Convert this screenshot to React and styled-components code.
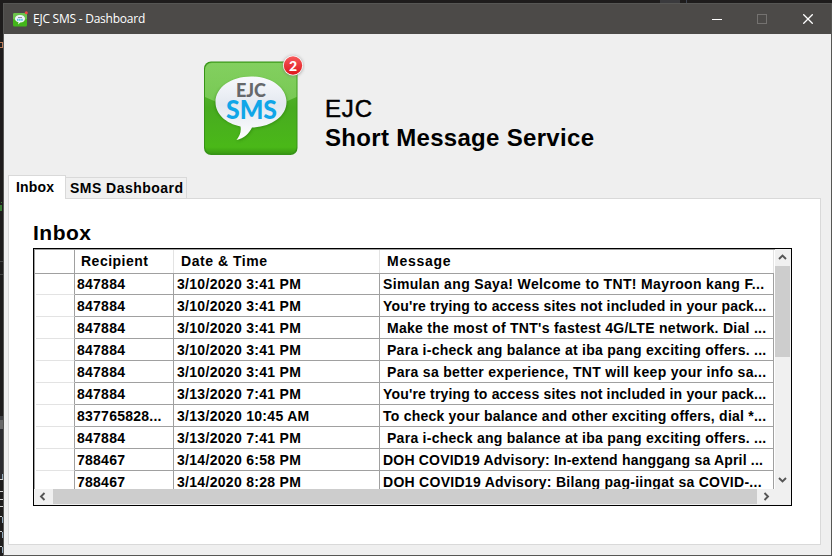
import React from "react";
import styled, { createGlobalStyle } from "styled-components";

const GlobalStyle = createGlobalStyle`
  * { box-sizing: border-box; }
  body { margin: 0; overflow: hidden; background: #1e1e1e; }
`;

const Desktop = styled.div`
  width: 832px;
  height: 556px;
  padding: 3px 0 0 3px;
  background:
    linear-gradient(#3a3a3d, #3a3a3d) 660px 0 / 20px 3px no-repeat,
    linear-gradient(#3d4350, #3d4350) 686px 0 / 1px 3px no-repeat,
    linear-gradient(#b77a58, #b77a58) 0 42px / 2px 1px no-repeat,
    linear-gradient(#b77a58, #b77a58) 0 47px / 2px 1px no-repeat,
    linear-gradient(#b77a58, #b77a58) 2px 42px / 1px 6px no-repeat,
    linear-gradient(#397a35, #397a35) 1px 202px / 1px 1px no-repeat,
    linear-gradient(#397a35, #397a35) 0 205px / 2px 6px no-repeat,
    linear-gradient(#434343, #434343) 0 261px / 3px 1px no-repeat,
    linear-gradient(#434343, #434343) 0 274px / 3px 1px no-repeat,
    linear-gradient(#3e3e42, #3e3e42) 0 416px / 3px 4px no-repeat,
    linear-gradient(#686868, #686868) 0 420px / 3px 9px no-repeat,
    linear-gradient(#8fa6b8, #8fa6b8) 2px 474px / 1px 5px no-repeat,
    linear-gradient(#d0d0d0, #d0d0d0) 0 479px / 3px 1px no-repeat,
    linear-gradient(#d0d0d0, #d0d0d0) 0 491px / 3px 1px no-repeat,
    linear-gradient(#d0d0d0, #d0d0d0) 0 499px / 3px 1px no-repeat,
    linear-gradient(#d0d0d0, #d0d0d0) 0 506px / 3px 1px no-repeat,
    linear-gradient(#d0d0d0, #d0d0d0) 0 516px / 2px 1px no-repeat,
    linear-gradient(#8fa6b8, #8fa6b8) 2px 517px / 1px 6px no-repeat,
    linear-gradient(#d0d0d0, #d0d0d0) 0 531px / 2px 1px no-repeat,
    linear-gradient(#8fa6b8, #8fa6b8) 2px 532px / 1px 6px no-repeat,
    linear-gradient(#d0d0d0, #d0d0d0) 0 546px / 2px 1px no-repeat,
    linear-gradient(#8fa6b8, #8fa6b8) 2px 547px / 1px 6px no-repeat,
    linear-gradient(#2c2c30, #2c2c30) 0 429px / 3px 50px no-repeat,
    #1e1c1c;
`;

const Window = styled.main`
  display: flex;
  flex-direction: column;
  width: 829px;
  height: 553px;
  border: 1px solid #565654;
  background: #efefef;
  color: #000;
  font-family: "Liberation Sans", Arial, sans-serif;
`;

const TitleBar = styled.header`
  display: flex;
  align-items: center;
  flex: 0 0 30px;
  padding-left: 8px;
  background: #4c4a48;
`;

const WindowTitle = styled.span`
  flex: 1;
  margin-left: 5px;
  color: #fff;
  font: 12px/16px "Open Sans", "Noto Sans", sans-serif;
  letter-spacing: -0.24px;
`;

const CaptionButton = styled.button`
  display: flex;
  align-items: center;
  justify-content: center;
  width: ${(p) => p.$width || 46}px;
  height: 30px;
  padding: 0;
  border: 0;
  background: none;
  color: ${(p) => (p.$muted ? "#747270" : "#fff")};
`;

const Banner = styled.section`
  display: flex;
  flex: 0 0 141px;
  padding: 18px 0 0 199px;
`;

const Heading = styled.h1`
  margin: 42px 0 0 20px;
  font-size: 24px;
  line-height: 29px;
  white-space: nowrap;
`;

const HeadingLine = styled.span`
  display: block;
  font-weight: ${(p) => (p.$light ? 400 : 700)};
  letter-spacing: ${(p) => p.$spacing}px;
  -webkit-text-stroke: ${(p) => (p.$light ? 0.5 : 0)}px #000;
`;

const TabBar = styled.nav`
  display: flex;
  align-items: flex-end;
  flex: 0 0 23px;
  margin-left: 4px;
`;

const Tab = styled.button`
  height: ${(p) => (p.$active ? 24 : 21)}px;
  width: ${(p) => p.$width}px;
  margin-bottom: ${(p) => (p.$active ? -1 : 0)}px;
  padding: 0 0 ${(p) => (p.$active ? 2 : 0)}px ${(p) => (p.$active ? 7 : 4)}px;
  z-index: ${(p) => (p.$active ? 1 : 0)};
  border: 1px solid #d9d9d9;
  border-left-width: ${(p) => (p.$active ? 1 : 0)}px;
  border-bottom: 0;
  background: ${(p) => (p.$active ? "#fff" : "#f0f0f0")};
  color: #000;
  font: bold 14px/20px "Liberation Sans", Arial, sans-serif;
  letter-spacing: ${(p) => p.$spacing}px;
  text-align: left;
  white-space: nowrap;
`;

const TabPanel = styled.section`
  flex: 0 0 347px;
  width: 813px;
  margin-left: 4px;
  padding: 21px 24px 0;
  border: 1px solid #d9d9d9;
  background: #fff;
`;

const PanelTitle = styled.h2`
  height: 28px;
  margin: 0;
  font-family: "Liberation Sans", Arial, sans-serif;
  font-size: 21px;
  line-height: 25px;
  font-weight: 700;
  letter-spacing: 0.5px;
`;

const GridFrame = styled.div`
  display: grid;
  grid-template-columns: 741px 16px;
  grid-template-rows: 240px 16px;
  width: 759px;
  height: 258px;
  border: 1px solid #000;
  background: #f0f0f0;
`;

const Viewport = styled.div`
  overflow: hidden;
  border-top: 1px solid #a0a0a0;
  border-left: 1px solid #a0a0a0;
  background: #fff;
  font-size: 14px;
  font-weight: 700;
`;

const GridRow = styled.div`
  display: grid;
  grid-template-columns: 40px 99px 206px 394px;
  height: ${(p) => (p.$header ? 23 : 22)}px;
`;

const HeaderCell = styled.div`
  padding-left: ${(p) => p.$indent || 7}px;
  border-right: 1px solid ${(p) => (p.$corner ? "#a0a0a0" : "#e3e3e3")};
  border-bottom: 1px solid #a0a0a0;
  line-height: 23px;
  letter-spacing: ${(p) => p.$spacing}px;
`;

const RowHeader = styled.div`
  margin-left: 1px;
  border-right: 1px solid #a0a0a0;
  border-bottom: 1px solid #e3e3e3;
`;

const Cell = styled.div`
  overflow: hidden;
  padding-left: ${(p) => (p.$indent ? 7 : 3)}px;
  border-right: 1px solid #a0a0a0;
  border-bottom: 1px solid #a0a0a0;
  line-height: 23px;
  letter-spacing: ${(p) => p.$spacing}px;
  white-space: nowrap;
`;

const RecipientCell = styled(Cell)`
  padding-left: 2px;
`;

const VerticalBar = styled.div`
  display: flex;
  flex-direction: column;
  padding-right: 1px;
`;

const HorizontalBar = styled.div`
  display: flex;
  padding: 0 0 1px;
`;

const ArrowButton = styled.button`
  display: flex;
  align-items: center;
  justify-content: center;
  flex: 0 0 ${(p) => p.$size}px;
  padding: 0;
  border: 0;
  background: #f0f0f0;
`;

const Thumb = styled.div`
  flex: 0 0 ${(p) => p.$length}px;
  background: #cdcdcd;
`;

const Track = styled.div`
  flex: 1;
`;

const ARROWS = {
  up: "M1 6 4.5 2.5 8 6",
  down: "M1 2 4.5 5.5 8 2",
  left: "M5.5 1 2 4.5 5.5 8",
  right: "M2.500 1 6 4.5 2.500 8",
};

function ScrollArrow({ direction, size }) {
  return (
    <ArrowButton $size={size} aria-label={direction}>
      <svg width="9" height="9" viewBox="0 0 9 9">
        <path d={ARROWS[direction]} fill="none" stroke="#555" strokeWidth="1.9" />
      </svg>
    </ArrowButton>
  );
}

function Logo() {
  return (
    <svg width="102" height="104" viewBox="0 0 102 104">
      <defs>
        <linearGradient id="tile" x1="0" y1="0" x2="0" y2="1">
          <stop offset="0" stopColor="#66bb40" />
          <stop offset=".5" stopColor="#48ab20" />
          <stop offset=".93" stopColor="#4ab818" />
          <stop offset="1" stopColor="#3a9c12" />
        </linearGradient>
        <linearGradient id="shine" x1="0" y1="0" x2="0" y2="1">
          <stop offset="0" stopColor="#8fd86c" stopOpacity=".7" />
          <stop offset="1" stopColor="#93da72" stopOpacity=".6" />
        </linearGradient>
        <linearGradient id="bubble" x1="0" y1="0" x2="0" y2="1">
          <stop offset="0" stopColor="#f8f9fc" />
          <stop offset=".45" stopColor="#e3e8f0" />
          <stop offset="1" stopColor="#fff" />
        </linearGradient>
        <linearGradient id="badge" x1="0" y1="0" x2="0" y2="1">
          <stop offset="0" stopColor="#f7595a" />
          <stop offset="1" stopColor="#dd161c" />
        </linearGradient>
        <filter id="soft" x="-20%" y="-20%" width="140%" height="140%">
          <feGaussianBlur stdDeviation="1.5" />
        </filter>
      </defs>
      <rect x="1" y="9.500" width="93.500" height="93.500" rx="7" fill="#369416" />
      <rect x="2" y="10.500" width="91.500" height="91" rx="6.500" fill="url(#tile)" />
      <path d="M2 18a7 7 0 0 1 7-7h77.500a7 7 0 0 1 7 7v27Q48 68 2 45Z" fill="url(#shine)" />
      <path
        d="M48 26c20 0 36 11 36 25S68 76 50 76c-3 6-9 12-16 13 3-4 5-9 4-14C23 71 12 63 12 51c0-14 16-25 36-25Z"
        fill="#24740d"
        opacity=".6"
        filter="url(#soft)"
      />
      <path
        d="M48 24.500c20 0 35.500 11 35.500 25.500S68 75 49 75.500c-3 6-8 11-15.500 12.500 3-4 5-8 4-13.500C23 71.500 12.500 62 12.500 50 12.500 35.500 28 24.500 48 24.500Z"
        fill="url(#bubble)"
      />
      <g fontFamily="Lato, sans-serif" fontWeight="900">
        <text x="33" y="44.500" fontSize="18" textLength="30" lengthAdjust="spacingAndGlyphs" fill="#66686b">EJC</text>
        <text x="23" y="66.500" fontSize="27" textLength="51" lengthAdjust="spacingAndGlyphs" fill="#10a6e8">SMS</text>
      </g>
      <circle cx="90" cy="14" r="10.500" fill="#777" opacity=".5" filter="url(#soft)" />
      <circle cx="90" cy="13.500" r="10" fill="#fff" />
      <circle cx="90" cy="13.500" r="9.200" fill="url(#badge)" />
      <text x="90" y="18.500" fontFamily="Lato, sans-serif" fontWeight="900" fontSize="14" textAnchor="middle" fill="#fff">2</text>
    </svg>
  );
}

function AppIcon() {
  return (
    <svg width="16" height="16" viewBox="0 0 16 16">
      <rect x="1" y="2" width="14" height="13.500" rx="1.500" fill="#43b51b" />
      <path d="M1 3.500A1.500 1.500 0 0 1 2.500 2h11A1.500 1.500 0 0 1 15 3.500V8Q8 11 1 8Z" fill="#6cc34b" />
      <path d="M8 4c3 0 5 1.600 5 3.700s-2 3.700-4.700 3.700L6 13.500l.5-2.300C4.500 10.700 3 9.500 3 7.700 3 5.600 5 4 8 4Z" fill="#eef5f9" />
      <path d="M6 6.500h4" stroke="#8b9299" />
      <path d="M5 8.800h6" stroke="#56bce5" strokeWidth="2" strokeDasharray="1.500 .6" />
      <circle cx="14.300" cy="1.800" r="1.500" fill="#ee4444" />
    </svg>
  );
}

const MESSAGES = [
  ["847884", "3/10/2020 3:41 PM", "Simulan ang Saya! Welcome to TNT! Mayroon kang F...", 0.346],
  ["847884", "3/10/2020 3:41 PM", "You're trying to access sites not included in your pack...", 0.17],
  ["847884", "3/10/2020 3:41 PM", "Make the most of TNT's fastest 4G/LTE network. Dial ...", 0.28, true],
  ["847884", "3/10/2020 3:41 PM", "Para i-check ang balance at iba pang exciting offers. ...", 0.27, true],
  ["847884", "3/10/2020 3:41 PM", "Para sa better experience, TNT will keep your info sa...", 0.315, true],
  ["847884", "3/13/2020 7:41 PM", "You're trying to access sites not included in your pack...", 0.17],
  ["837765828...", "3/13/2020 10:45 AM", "To check your balance and other exciting offers, dial *...", 0.228],
  ["847884", "3/13/2020 7:41 PM", "Para i-check ang balance at iba pang exciting offers. ...", 0.27, true],
  ["788467", "3/14/2020 6:58 PM", "DOH COVID19 Advisory: In-extend hanggang sa April ...", 0.19],
  ["788467", "3/14/2020 8:28 PM", "DOH COVID19 Advisory: Bilang pag-iingat sa COVID-...", 0.28],
];

export default function App() {
  return (
    <Desktop>
      <GlobalStyle />
      <Window>
        <TitleBar>
          <AppIcon />
          <WindowTitle>EJC SMS - Dashboard</WindowTitle>
          <CaptionButton $width={44} aria-label="Minimize">
            <svg width="10" height="10"><path d="M0 5.500h10" stroke="currentColor" /></svg>
          </CaptionButton>
          <CaptionButton $muted disabled aria-label="Maximize">
            <svg width="10" height="10"><rect x=".5" y=".5" width="9" height="9" fill="none" stroke="currentColor" /></svg>
          </CaptionButton>
          <CaptionButton aria-label="Close">
            <svg width="10" height="10"><path d="M.3.3 9.700 9.700M9.700.3.3 9.700" stroke="currentColor" strokeWidth="1.300" /></svg>
          </CaptionButton>
        </TitleBar>
        <Banner>
          <Logo />
          <Heading>
            <HeadingLine $light $spacing={0.83}>EJC</HeadingLine>
            <HeadingLine $spacing={0.31}>Short Message Service</HeadingLine>
          </Heading>
        </Banner>
        <TabBar>
          <Tab $active $width={58} $spacing={0.17}>Inbox</Tab>
          <Tab $width={121} $spacing={0.47}>SMS Dashboard</Tab>
        </TabBar>
        <TabPanel>
          <PanelTitle>Inbox</PanelTitle>
          <GridFrame>
            <Viewport>
              <GridRow $header>
                <HeaderCell $corner />
                <HeaderCell $spacing={0.5} $indent={6}>Recipient</HeaderCell>
                <HeaderCell $spacing={0.53}>Date &amp; Time</HeaderCell>
                <HeaderCell $spacing={0.75}>Message</HeaderCell>
              </GridRow>
              {MESSAGES.map(([recipient, date, message, spacing, indent], i) => (
                <GridRow key={i}>
                  <RowHeader />
                  <RecipientCell $spacing={0.25}>{recipient}</RecipientCell>
                  <Cell $spacing={0.3}>{date}</Cell>
                  <Cell $spacing={spacing} $indent={indent}>{message}</Cell>
                </GridRow>
              ))}
            </Viewport>
            <VerticalBar>
              <ScrollArrow direction="up" size={17} />
              <Thumb $length={91} />
              <Track />
              <ScrollArrow direction="down" size={17} />
            </VerticalBar>
            <HorizontalBar>
              <ScrollArrow direction="left" size={19} />
              <Thumb $length={704} />
              <ScrollArrow direction="right" size={18} />
            </HorizontalBar>
          </GridFrame>
        </TabPanel>
      </Window>
    </Desktop>
  );
}
